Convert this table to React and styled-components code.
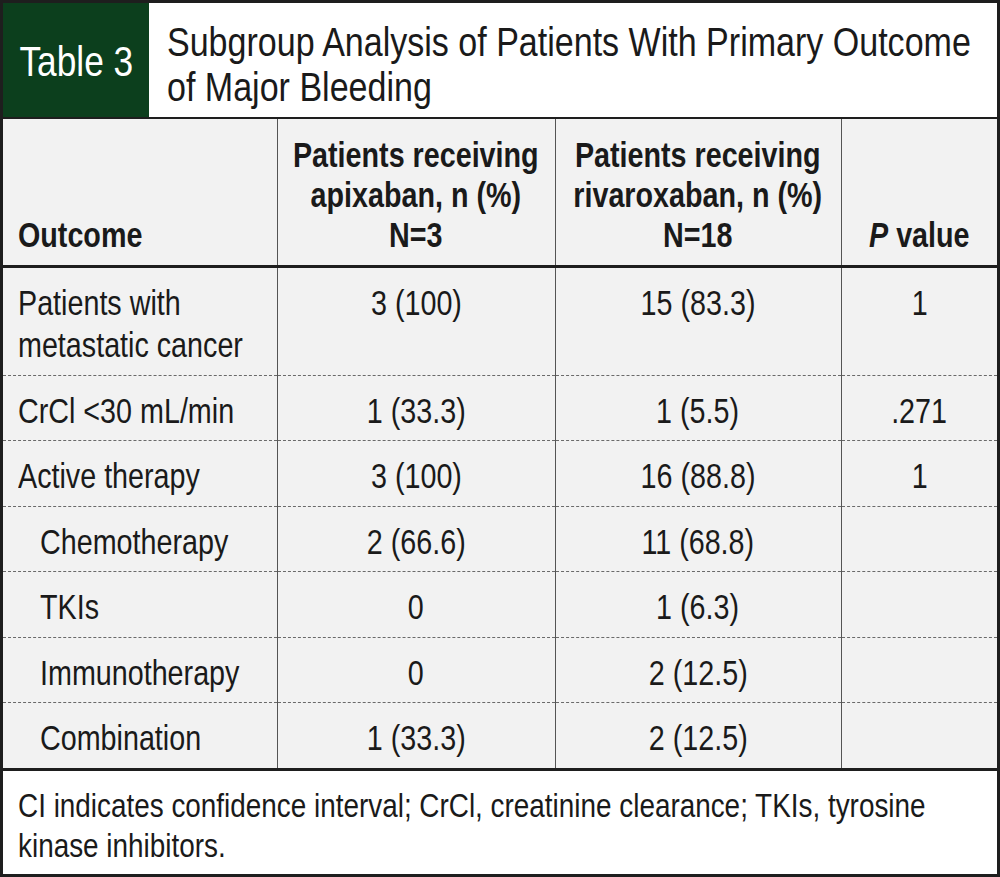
import React from 'react';
import styled, { createGlobalStyle } from 'styled-components';

// No condensed face is installed, so text is drawn in Liberation Sans
// and squeezed horizontally to the width of a narrow grotesque.
const NARROW = 0.82;

const GlobalStyle = createGlobalStyle`
  html, body {
    margin: 0;
    padding: 0;
    background: #ffffff;
  }
  body {
    font-family: "Liberation Sans", Arial, sans-serif;
    color: #1a1a1a;
  }
`;

// negative side margins keep the unscaled box narrow enough to stay centred
const Squeeze = styled.span`
  display: inline-block;
  white-space: nowrap;
  transform: scaleX(${NARROW});
  transform-origin: ${({ $origin }) => $origin || 'center'};
  margin: ${({ $origin }) => ($origin === 'left' ? '0' : '0 -60px')};
`;

const Frame = styled.div`
  box-sizing: border-box;
  width: 1000px;
  height: 877px;
  border: 3px solid #1e1e1e;
  display: flex;
  flex-direction: column;
  background: #ffffff;
  overflow: hidden;
`;

const TitleBar = styled.div`
  display: flex;
  border-bottom: 2px solid #1e1e1e;
`;

const TableLabel = styled.div`
  flex: 0 0 146px;
  display: flex;
  align-items: center;
  justify-content: center;
  background: #0c3f1d;
  color: #ffffff;
  font-size: 43px;
  padding-top: 2px;
  overflow: hidden;
`;

const TitleText = styled.h1`
  margin: 0;
  padding: 16px 18px 8px;
  font-size: 41.5px;
  line-height: 45px;
  font-weight: 400;
  min-width: 0;
`;

const DataTable = styled.table`
  width: 100%;
  border-collapse: collapse;
  table-layout: fixed;
  background: #f2f2f2;
`;

const HeadRow = styled.tr`
  border-bottom: 3px solid #1e1e1e;
`;

const HeadCell = styled.th`
  padding: 16px 10px 10px;
  font-size: 35px;
  line-height: 40px;
  font-weight: 700;
  vertical-align: bottom;
  text-align: ${({ $align }) => $align || 'center'};
  padding-left: ${({ $align }) => ($align === 'left' ? '15px' : '10px')};
  border-left: ${({ $first }) => ($first ? 'none' : '1px solid #555555')};
`;

const BodyRow = styled.tr`
  & + & {
    border-top: 1px dashed #6a6a6a;
  }
`;

const BodyCell = styled.td`
  padding: 14px 10px 8.5px;
  font-size: 35px;
  line-height: 42px;
  vertical-align: top;
  text-align: center;
  border-left: 1px solid #555555;
`;

const LabelCell = styled(BodyCell)`
  text-align: left;
  padding-left: ${({ $indent }) => ($indent ? '37px' : '15px')};
  border-left: none;
`;

const Footer = styled.div`
  flex: 1;
  border-top: 3px solid #1e1e1e;
  padding: 14px 15px 0;
  font-size: 34px;
  line-height: 40px;
`;

const rows = [
  { label: ['Patients with', 'metastatic cancer'], apix: '3 (100)', riva: '15 (83.3)', p: '1' },
  { label: ['CrCl <30 mL/min'], apix: '1 (33.3)', riva: '1 (5.5)', p: '.271' },
  { label: ['Active therapy'], apix: '3 (100)', riva: '16 (88.8)', p: '1' },
  { label: ['Chemotherapy'], apix: '2 (66.6)', riva: '11 (68.8)', p: '', indent: true },
  { label: ['TKIs'], apix: '0', riva: '1 (6.3)', p: '', indent: true },
  { label: ['Immunotherapy'], apix: '0', riva: '2 (12.5)', p: '', indent: true },
  { label: ['Combination'], apix: '1 (33.3)', riva: '2 (12.5)', p: '', indent: true },
];

const Lines = ({ lines }) =>
  lines.map((line, i) => (
    <React.Fragment key={line}>
      {i > 0 && <br />}
      {line}
    </React.Fragment>
  ));

const App = () => (
  <>
    <GlobalStyle />
    <Frame>
      <TitleBar>
        <TableLabel>
          <Squeeze>Table 3</Squeeze>
        </TableLabel>
        <TitleText>
          <Squeeze $origin="left">
            Subgroup Analysis of Patients With Primary Outcome
            <br />
            of Major Bleeding
          </Squeeze>
        </TitleText>
      </TitleBar>
      <DataTable>
        <colgroup>
          <col style={{ width: '274px' }} />
          <col style={{ width: '278px' }} />
          <col style={{ width: '286px' }} />
          <col />
        </colgroup>
        <thead>
          <HeadRow>
            <HeadCell $align="left" $first>
              <Squeeze $origin="left">Outcome</Squeeze>
            </HeadCell>
            <HeadCell>
              <Squeeze>
                Patients receiving
                <br />
                apixaban, n (%)
                <br />
                N=3
              </Squeeze>
            </HeadCell>
            <HeadCell>
              <Squeeze>
                Patients receiving
                <br />
                rivaroxaban, n (%)
                <br />
                N=18
              </Squeeze>
            </HeadCell>
            <HeadCell>
              <Squeeze>
                <i>P</i> value
              </Squeeze>
            </HeadCell>
          </HeadRow>
        </thead>
        <tbody>
          {rows.map((row) => (
            <BodyRow key={row.label.join(' ')}>
              <LabelCell $indent={row.indent}>
                <Squeeze $origin="left">
                  <Lines lines={row.label} />
                </Squeeze>
              </LabelCell>
              <BodyCell>
                <Squeeze>{row.apix}</Squeeze>
              </BodyCell>
              <BodyCell>
                <Squeeze>{row.riva}</Squeeze>
              </BodyCell>
              <BodyCell>
                <Squeeze>{row.p}</Squeeze>
              </BodyCell>
            </BodyRow>
          ))}
        </tbody>
      </DataTable>
      <Footer>
        <Squeeze $origin="left">
          CI indicates confidence interval; CrCl, creatinine clearance; TKIs, tyrosine
          <br />
          kinase inhibitors.
        </Squeeze>
      </Footer>
    </Frame>
  </>
);

export default App;
